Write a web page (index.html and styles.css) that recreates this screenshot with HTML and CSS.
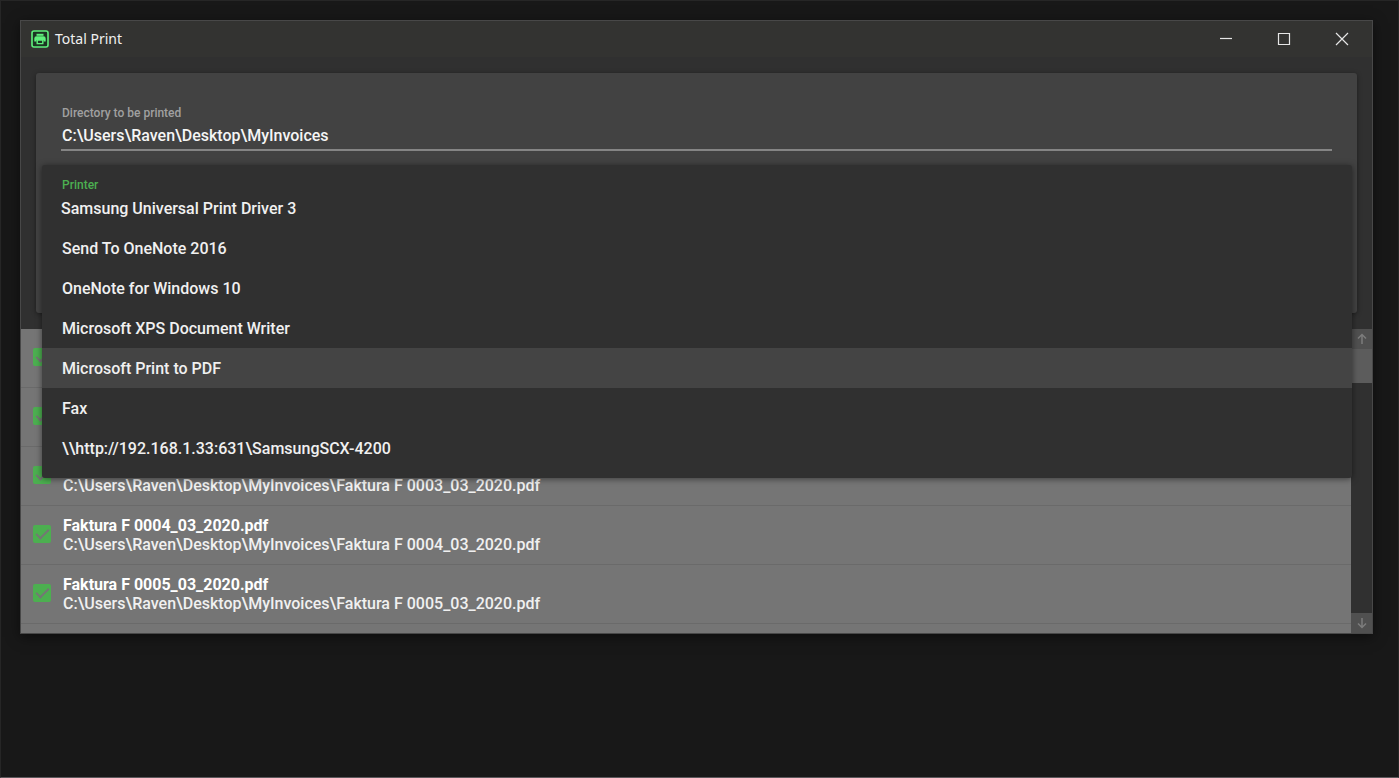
FILE: index.html
```html
<!DOCTYPE html>
<html lang="en">
<head>
<meta charset="utf-8">
<title>Total Print</title>
<link rel="stylesheet" href="styles.css">
</head>
<body>
<main class="window">
  <header class="titlebar">
    <svg class="logo" viewBox="0 0 18 18" aria-hidden="true">
      <rect x="1" y="1" width="16" height="16" rx="2" fill="#1c3323" stroke="#5ff07c" stroke-width="1.6"/>
      <path d="M5.500 3.800h7v2h-7z" fill="#5ff07c"/>
      <path d="M5.500 6.300h7a2.200 2.200 0 0 1 2.200 2.200v3h-2.200V10h-7v1.500H3.300v-3a2.200 2.200 0 0 1 2.200-2.200z" fill="#5ff07c"/>
      <path d="M6.200 10h5.600v3.600H6.200z" fill="#1c3323" stroke="#5ff07c" stroke-width="1.400"/>
    </svg>
    <h1 class="title">Total Print</h1>
    <div class="controls">
      <button class="control" aria-label="Minimize"><svg viewBox="0 0 14 14"><path d="M1 6.500h12"/></svg></button>
      <button class="control" aria-label="Maximize"><svg viewBox="0 0 14 14"><path d="M1.500 1.500h11v11h-11z"/></svg></button>
      <button class="control" aria-label="Close"><svg viewBox="0 0 14 14"><path d="M1 1l12 12M13 1L1 13"/></svg></button>
    </div>
  </header>

  <section class="card">
    <div class="field">
      <label class="label" for="directory">Directory to be printed</label>
      <input class="input" id="directory" type="text" value="C:\Users\Raven\Desktop\MyInvoices">
    </div>
    <div class="menu">
      <span class="label label-active" id="printer-label">Printer</span>
      <button class="selected" aria-haspopup="listbox" aria-expanded="true" aria-labelledby="printer-label printer-value"><span id="printer-value">Samsung Universal Print Driver 3</span></button>
      <div class="options" role="listbox" aria-labelledby="printer-label">
        <button class="option" role="option">Send To OneNote 2016</button>
        <button class="option" role="option">OneNote for Windows 10</button>
        <button class="option" role="option">Microsoft XPS Document Writer</button>
        <button class="option option-hover" role="option">Microsoft Print to PDF</button>
        <button class="option" role="option">Fax</button>
        <button class="option" role="option">\\http://192.168.1.33:631\SamsungSCX-4200</button>
      </div>
    </div>
  </section>

  <section class="files">
    <ul class="list">
      <li class="row"><input class="check" type="checkbox" id="f1" checked aria-label="File 1"></li>
      <li class="row"><input class="check" type="checkbox" id="f2" checked aria-label="File 2"></li>
      <li class="row"><input class="check" type="checkbox" id="f3" checked><label class="file" for="f3"><span class="path path-only">C:\Users\Raven\Desktop\MyInvoices\Faktura F 0003_03_2020.pdf</span></label></li>
      <li class="row"><input class="check" type="checkbox" id="f4" checked><label class="file" for="f4"><strong class="name">Faktura F 0004_03_2020.pdf</strong><span class="path">C:\Users\Raven\Desktop\MyInvoices\Faktura F 0004_03_2020.pdf</span></label></li>
      <li class="row"><input class="check" type="checkbox" id="f5" checked><label class="file" for="f5"><strong class="name">Faktura F 0005_03_2020.pdf</strong><span class="path">C:\Users\Raven\Desktop\MyInvoices\Faktura F 0005_03_2020.pdf</span></label></li>
    </ul>
    <div class="scrollbar">
      <button class="arrow" aria-label="Scroll up"><svg viewBox="0 0 12 12"><path d="M6 11V1.500M2 5.500l4-4 4 4"/></svg></button>
      <div class="thumb"></div>
      <button class="arrow arrow-down" aria-label="Scroll down"><svg viewBox="0 0 12 12"><path d="M6 1v9.500M2 6.500l4 4 4-4"/></svg></button>
    </div>
  </section>
</main>
</body>
</html>
```
FILE: styles.css
```css
*,
*::before {
  box-sizing: border-box;
}

body {
  margin: 0;
  min-height: 100vh;
  padding: 19px 25px 19px 19px;
  background: #181818;
  border: 1px solid #262626;
  border-bottom-color: #5c585c;
  font: 500 16px/20px Roboto, sans-serif;
  color: #f0f0f0;
}

button {
  border: 0;
  padding: 0;
  background: none;
  color: inherit;
  font: inherit;
  text-align: left;
}

svg {
  display: block;
  fill: none;
}

.window {
  display: flex;
  flex-direction: column;
  height: calc(100vh - 164px);
  background: #303030;
  border: 1px solid #484848;
  box-shadow: 0 3px 12px rgba(0, 0, 0, 0.5);
}

.titlebar {
  display: flex;
  align-items: center;
  gap: 6px;
  height: 36px;
  padding: 0 1px 0 10px;
  background: #333331;
}

.logo {
  width: 18px;
  height: 18px;
}

.title {
  flex: 1;
  margin: 0;
  font: 400 14px/22px "Noto Sans", sans-serif;
}

.controls {
  display: flex;
}

.control {
  display: grid;
  place-items: center;
  width: 58px;
  height: 36px;
}

.control svg {
  width: 14px;
  height: 14px;
  stroke: #e6e6e6;
  stroke-width: 1.2;
}

.card {
  position: relative;
  flex: none;
  height: 240px;
  margin: 16px 15px;
  padding: 30px 25px;
  background: #424242;
  border-radius: 3px;
  box-shadow: 0 1px 5px rgba(0, 0, 0, 0.4);
}

.field {
  display: flex;
  flex-direction: column;
}

.label {
  display: block;
  font-size: 12px;
  line-height: 20px;
  color: #a0a0a0;
}

.label-active {
  color: #4caf50;
}

.input {
  width: 100%;
  height: 28px;
  padding: 0 0 2px;
  border: 0;
  border-bottom: 2px solid #858585;
  outline: 0;
  background: none;
  color: #f5f5f5;
  font: inherit;
}

.field .label,
.input {
  padding-left: 1px;
}

.menu {
  position: absolute;
  z-index: 1;
  top: 92px;
  left: 6px;
  right: 5px;
  padding: 10px 0;
  background: #303030;
  border-radius: 3px;
  box-shadow: 0 1px 6px rgba(0, 0, 0, 0.5);
}

.menu .label,
.option {
  padding-left: 20px;
}

.selected {
  display: block;
  width: 100%;
  height: 33px;
  padding: 0 0 6px 19px;
}

.options {
  display: flex;
  flex-direction: column;
}

.option {
  height: 40px;
  padding-top: 2px;
}

.option-hover {
  background: #444444;
}

.files {
  display: flex;
  flex: 1;
  min-height: 0;
}

.list {
  flex: 1;
  margin: 0;
  padding: 0;
  overflow: hidden;
  list-style: none;
  background: #757575;
}

.row {
  display: flex;
  align-items: center;
  gap: 12px;
  height: 59px;
  padding-left: 12px;
  border-bottom: 1px solid #6a6a6a;
}

.check {
  flex: none;
  display: grid;
  place-items: center;
  width: 18px;
  height: 18px;
  margin: 0 0 2px;
  appearance: none;
  border-radius: 2px;
  background: #4caf50;
}

.check::before {
  content: "";
  width: 13px;
  height: 7px;
  margin-bottom: 3px;
  border: solid #757575;
  border-width: 0 0 2px 2px;
  rotate: -45deg;
}

.file {
  display: flex;
  flex-direction: column;
  line-height: 19px;
}

.name {
  font-weight: 700;
  color: #ffffff;
}

.path-only {
  padding-top: 19px;
}

.scrollbar {
  display: flex;
  flex-direction: column;
  width: 21px;
  background: #303030;
}

.arrow {
  display: grid;
  place-items: center;
  height: 20px;
  background: #505050;
}

.arrow svg {
  width: 12px;
  height: 12px;
  stroke: #7c7c7c;
  stroke-width: 1.5;
}

.arrow-down {
  margin-top: auto;
}

.thumb {
  height: 34px;
  background: #5c5c5c;
}
```
